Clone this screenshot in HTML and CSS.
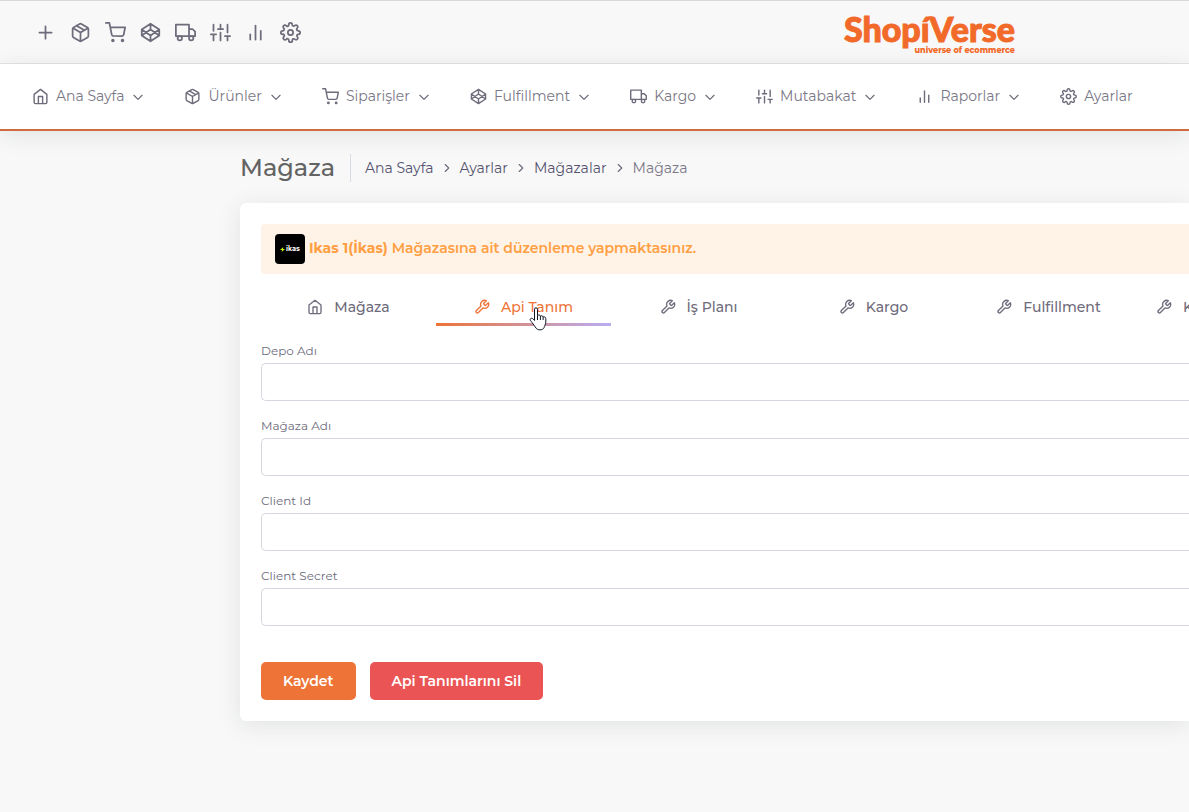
FILE: index.html
```html
<!DOCTYPE html>
<html lang="tr">
<head>
<meta charset="utf-8">
<title>Mağaza - ShopiVerse</title>
<link rel="stylesheet" href="styles.css">
</head>
<body>
<svg class="sprite" aria-hidden="true">
  <symbol id="plus" viewBox="0 0 24 24"><path d="M12 5v14M5 12h14"/></symbol>
  <symbol id="box" viewBox="0 0 24 24"><path d="M16.5 9.4l-9-5.19M21 16V8a2 2 0 0 0-1-1.73l-7-4a2 2 0 0 0-2 0l-7 4A2 2 0 0 0 3 8v8a2 2 0 0 0 1 1.73l7 4a2 2 0 0 0 2 0l7-4A2 2 0 0 0 21 16zM3.27 6.96L12 12.01l8.73-5.05M12 22.08V12"/></symbol>
  <symbol id="cart" viewBox="0 0 24 24"><circle cx="9" cy="21" r="1"/><circle cx="20" cy="21" r="1"/><path d="M1 1h4l2.68 13.39a2 2 0 0 0 2 1.61h9.72a2 2 0 0 0 2-1.61L23 6H6"/></symbol>
  <symbol id="codepen" viewBox="0 0 24 24"><path d="M12 2l10 6.5v7L12 22 2 15.5v-7L12 2zM12 22v-6.5M22 8.500l-10 7-10-7M2 15.500l10-7 10 7M12 2v6.500"/></symbol>
  <symbol id="truck" viewBox="0 0 24 24"><path d="M1 3h15v13H1zM16 8h4l3 3v5h-7z"/><circle cx="5.5" cy="18.5" r="2.5"/><circle cx="18.5" cy="18.5" r="2.5"/></symbol>
  <symbol id="sliders" viewBox="0 0 24 24"><path d="M4 21v-7M4 10V3M12 21v-9M12 8V3M20 21v-5M20 12V3M1 14h6M9 8h6M17 16h6"/></symbol>
  <symbol id="chart" viewBox="0 0 24 24"><path d="M18 20V10M12 20V4M6 20v-6"/></symbol>
  <symbol id="gear" viewBox="0 0 24 24"><circle cx="12" cy="12" r="3"/><path d="M19.4 15a1.65 1.65 0 0 0 .33 1.82l.06.06a2 2 0 1 1-2.83 2.83l-.06-.06a1.65 1.65 0 0 0-2.8 1.17V21a2 2 0 0 1-4 0v-.09a1.65 1.65 0 0 0-2.9-1.18l-.06.06a2 2 0 1 1-2.83-2.83l.06-.06A1.65 1.65 0 0 0 3.09 14H3a2 2 0 0 1 0-4h.09a1.65 1.65 0 0 0 1.18-2.9l-.06-.06a2 2 0 1 1 2.83-2.83l.06.06A1.65 1.65 0 0 0 10 3.09V3a2 2 0 0 1 4 0v.09a1.65 1.65 0 0 0 2.82 1.18l.06-.06a2 2 0 1 1 2.83 2.83l-.06.06A1.65 1.65 0 0 0 20.91 10H21a2 2 0 0 1 0 4h-.09a1.65 1.65 0 0 0-1.51 1z"/></symbol>
  <symbol id="home" viewBox="0 0 24 24"><path d="M3 9l9-7 9 7v11a2 2 0 0 1-2 2H5a2 2 0 0 1-2-2zM9 22V12h6v10"/></symbol>
  <symbol id="wrench" viewBox="0 0 24 24"><path d="M14.7 6.3a1 1 0 0 0 0 1.4l1.6 1.6a1 1 0 0 0 1.4 0l3.77-3.77a6 6 0 0 1-7.94 7.94l-6.91 6.91a2.12 2.12 0 0 1-3-3l6.91-6.91a6 6 0 0 1 7.94-7.94l-3.76 3.76z"/></symbol>
  <symbol id="down" viewBox="0 0 24 24"><path d="M5 9l7 7 7-7"/></symbol>
  <symbol id="right" viewBox="0 0 24 24"><path d="M9 18l6-6-6-6"/></symbol>
</svg>

<header class="topbar">
  <nav class="shortcuts" aria-label="Kısayollar">
    <a href="#" aria-label="Ekle"><svg class="icon icon-lg"><use href="#plus"/></svg></a>
    <a href="#" aria-label="Ürünler"><svg class="icon icon-lg"><use href="#box"/></svg></a>
    <a href="#" aria-label="Siparişler"><svg class="icon icon-lg"><use href="#cart"/></svg></a>
    <a href="#" aria-label="Fulfillment"><svg class="icon icon-lg"><use href="#codepen"/></svg></a>
    <a href="#" aria-label="Kargo"><svg class="icon icon-lg"><use href="#truck"/></svg></a>
    <a href="#" aria-label="Mutabakat"><svg class="icon icon-lg"><use href="#sliders"/></svg></a>
    <a href="#" aria-label="Raporlar"><svg class="icon icon-lg"><use href="#chart"/></svg></a>
    <a href="#" aria-label="Ayarlar"><svg class="icon icon-lg"><use href="#gear"/></svg></a>
  </nav>
  <a class="brand" href="#">
    <span class="brand-name">ShopíVerse</span>
    <span class="brand-tagline">universe of ecommerce</span>
  </a>
</header>

<nav class="menu" aria-label="Ana menü">
  <a href="#"><svg class="icon"><use href="#home"/></svg><span>Ana Sayfa</span><svg class="icon icon-sm"><use href="#down"/></svg></a>
  <a href="#"><svg class="icon"><use href="#box"/></svg><span>Ürünler</span><svg class="icon icon-sm"><use href="#down"/></svg></a>
  <a href="#"><svg class="icon"><use href="#cart"/></svg><span>Siparişler</span><svg class="icon icon-sm"><use href="#down"/></svg></a>
  <a href="#"><svg class="icon"><use href="#codepen"/></svg><span>Fulfillment</span><svg class="icon icon-sm"><use href="#down"/></svg></a>
  <a href="#"><svg class="icon"><use href="#truck"/></svg><span>Kargo</span><svg class="icon icon-sm"><use href="#down"/></svg></a>
  <a href="#"><svg class="icon"><use href="#sliders"/></svg><span>Mutabakat</span><svg class="icon icon-sm"><use href="#down"/></svg></a>
  <a href="#"><svg class="icon"><use href="#chart"/></svg><span>Raporlar</span><svg class="icon icon-sm"><use href="#down"/></svg></a>
  <a href="#"><svg class="icon"><use href="#gear"/></svg><span>Ayarlar</span></a>
</nav>

<main class="content">
  <div class="page-head">
    <h1>Mağaza</h1>
    <nav class="crumbs" aria-label="Konum">
      <a href="#">Ana Sayfa</a><svg class="icon icon-sm"><use href="#right"/></svg>
      <a href="#">Ayarlar</a><svg class="icon icon-sm"><use href="#right"/></svg>
      <a href="#">Mağazalar</a><svg class="icon icon-sm"><use href="#right"/></svg>
      <span>Mağaza</span>
    </nav>
  </div>

  <section class="card">
    <div class="notice">
      <span class="store-logo"><svg viewBox="0 0 6 6" aria-hidden="true"><path d="M4 0L0 3.6h2.4L2 6l4-3.600H3.600z"/></svg>ikas</span>
      <p><strong>Ikas 1(İkas)</strong> Mağazasına ait düzenleme yapmaktasınız.</p>
    </div>

    <div class="tabs" role="tablist">
      <button type="button" role="tab"><svg class="icon"><use href="#home"/></svg>Mağaza</button>
      <button type="button" role="tab" class="active" aria-selected="true"><svg class="icon"><use href="#wrench"/></svg>Api Tanım
        <svg class="pointer" viewBox="0 0 18 24" aria-hidden="true"><path d="M5.500 13.500V2.300a1.500 1.500 0 0 1 3 0V8.500c1-.9 2.600-.6 2.900.6 1-.7 2.400-.3 2.700.9 1.300-.6 2.700.2 2.700 1.600V15c0 2.500-1.600 4.200-1.800 5.800-1.400 2.700-6.600 2.700-8 .2C6 19 4 17.500 3 15.500c-.7-1.300-2-2-1.800-3.200.4-1.400 2.200-1.300 3-.3z"/><path d="M8.500 8.500V13M11.400 9.100V13M14.100 10v3"/></svg>
      </button>
      <button type="button" role="tab"><svg class="icon"><use href="#wrench"/></svg>İş Planı</button>
      <button type="button" role="tab"><svg class="icon"><use href="#wrench"/></svg>Kargo</button>
      <button type="button" role="tab"><svg class="icon"><use href="#wrench"/></svg>Fulfillment</button>
      <button type="button" role="tab" class="start"><svg class="icon"><use href="#wrench"/></svg>K</button>
    </div>

    <form>
      <div class="field"><label for="depo">Depo Adı</label><input id="depo" type="text"></div>
      <div class="field"><label for="magaza">Mağaza Adı</label><input id="magaza" type="text"></div>
      <div class="field"><label for="client-id">Client Id</label><input id="client-id" type="text"></div>
      <div class="field"><label for="client-secret">Client Secret</label><input id="client-secret" type="text"></div>
      <div class="actions">
        <button type="submit" class="btn">Kaydet</button>
        <button type="button" class="btn btn-danger">Api Tanımlarını Sil</button>
      </div>
    </form>
  </section>
</main>
</body>
</html>
```
FILE: styles.css
```css
* { box-sizing: border-box; }
body {
  margin: 0;
  min-height: 100vh;
  overflow-x: hidden;
  background: #f8f8f8;
  color: #6e6b7b;
  font-family: Montserrat, "Open Sans", sans-serif;
  font-size: 14px;
  line-height: 20px;
}
a { color: inherit; text-decoration: none; }
button, input { font: inherit; }
.sprite { display: none; }
.icon {
  flex: none;
  width: 17px;
  height: 17px;
  fill: none;
  stroke: currentColor;
  stroke-width: 2;
  stroke-linecap: round;
  stroke-linejoin: round;
}
.icon-lg { width: 21px; height: 21px; }
.icon-sm { width: 14px; height: 14px; }

.topbar {
  display: flex;
  align-items: center;
  justify-content: space-between;
  height: 64px;
  padding: 0 174px 0 35px;
  border-top: 1px solid #d8d8d8;
  border-bottom: 1px solid #e4e4e4;
}
.shortcuts { display: flex; gap: 14px; }
.shortcuts a { display: flex; }
.brand { display: flex; flex-direction: column; align-items: flex-end; color: #f26a2a; }
.brand-name { font: 900 34px/35px Lato, sans-serif; -webkit-text-stroke: 1px #f26a2a; }
.brand-tagline { font: 800 8px/8px Montserrat, sans-serif; }

.menu {
  display: flex;
  gap: 39px;
  align-items: center;
  height: 67px;
  padding: 0 32px;
  background: #fff;
  border-bottom: 2px solid #ce6c3f;
  box-shadow: 0 4px 24px rgba(34, 41, 47, .1);
}
.menu a { display: flex; align-items: center; gap: 7px; white-space: nowrap; }
.menu span { padding-bottom: 2px; color: #7a7786; }

.content { padding: 22px 0 40px 240px; }
.page-head { display: flex; align-items: center; height: 30px; margin-bottom: 20px; }
h1 {
  margin: 0;
  padding-right: 15px;
  border-right: 1px solid #d6dce1;
  color: #636363;
  font-size: 24px;
  font-weight: 500;
  line-height: 28px;
}
.crumbs { display: flex; align-items: center; gap: 6px; padding-left: 14px; }
.crumbs a { color: #55536f; }
.crumbs span { color: #7a7786; }

.card {
  padding: 21px 0 21px 21px;
  border-radius: 6px 0 0 6px;
  background: #fff;
  box-shadow: 0 4px 24px rgba(34, 41, 47, .1);
}
.notice {
  display: flex;
  align-items: center;
  gap: 4px;
  height: 50px;
  padding: 0 14px;
  border-radius: 4px 0 0 4px;
  background: #fff2e6;
  color: #ff9f43;
  font-weight: 600;
}
.notice p { margin: 0; padding-bottom: 2px; }
.notice strong { font-weight: 700; }
.store-logo {
  display: flex;
  align-items: center;
  justify-content: center;
  gap: 1px;
  width: 30px;
  height: 30px;
  border-radius: 4px;
  background: #000;
  color: #fff;
  font: 700 7px/8px Inter, sans-serif;
}
.store-logo svg { width: 5px; height: 5px; fill: #c6f000; }

.tabs { display: flex; margin-top: 14px; }
.tabs button {
  position: relative;
  display: flex;
  flex: 0 0 175px;
  align-items: center;
  justify-content: center;
  gap: 11px;
  height: 38px;
  padding: 0 20px;
  border: 0;
  background: none;
  color: inherit;
  font-weight: 500;
}
.tabs .icon { width: 16px; height: 16px; }
.tabs .start {
  flex: 1 1 0;
  min-width: 0;
  justify-content: flex-start;
  overflow: hidden;
  padding-right: 0;
}
.tabs .active {
  border-bottom: 3px solid;
  border-image: linear-gradient(to right, #ee7337, #b8aef5) 1;
  padding-top: 3px;
  color: #ee7337;
}
.pointer {
  position: absolute;
  top: 19px;
  left: 93px;
  width: 18px;
  height: 24px;
  fill: #fff;
  stroke: #111827;
  stroke-width: 1;
}

form { margin-top: 15px; }
.field { display: flex; flex-direction: column; gap: 3px; margin-bottom: 15px; }
.field label { font-size: 12px; line-height: 19px; }
.field input {
  height: 38px;
  padding: 0 14px;
  border: 1px solid #d8d6de;
  border-right: 0;
  border-radius: 5px 0 0 5px;
  background: #fff;
}
.actions { display: flex; gap: 14px; padding-top: 21px; }
.btn {
  height: 38px;
  padding: 0 22px;
  border: 0;
  border-radius: 5px;
  background: #ee7337;
  color: #fff;
  font-weight: 600;
}
.btn-danger { background: #ea5455; }
```
